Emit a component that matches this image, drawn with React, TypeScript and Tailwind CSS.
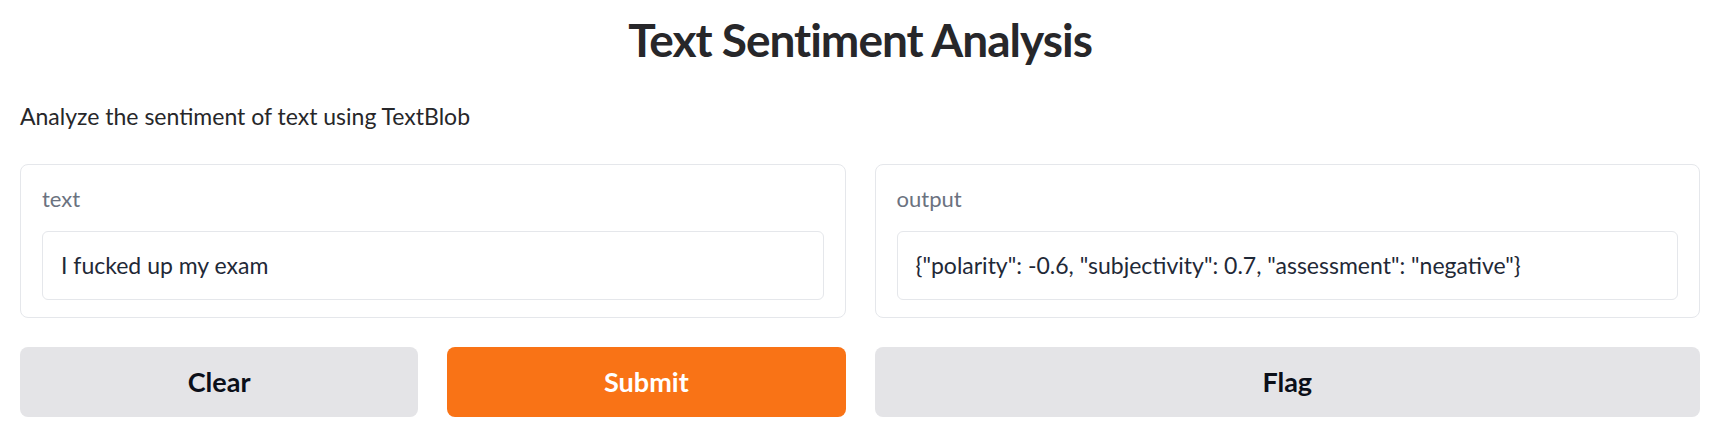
import React from "react";

const font = { fontFamily: '"Lato", "Liberation Sans", sans-serif' };

function Panel({ label, value }: { label: string; value: string }) {
  return (
    <div className="flex h-[154px] flex-col rounded-lg border border-[#e5e7eb] bg-white px-[21px] pt-[20px]">
      <span className="text-[22px] leading-[28px] text-[#6b7280]">{label}</span>
      <div className="mt-[18px] flex h-[69px] items-center rounded-md border border-[#e5e7eb] px-[18px] text-[23px] text-[#1f2937]">
        {value}
      </div>
    </div>
  );
}

export default function App() {
  return (
    <div className="min-h-[442px] bg-white pl-[20px] pr-[23px]" style={font}>
      <h1 className="pt-[12px] text-center text-[46px] font-bold leading-[56px] tracking-[-1px] text-[#27272a]">
        Text Sentiment Analysis
      </h1>
      <p className="mt-[33px] text-[23px] leading-[30px] text-[#27272a]">
        Analyze the sentiment of text using TextBlob
      </p>

      <div className="mt-[33px] grid grid-cols-2 gap-[29px]">
        <div className="flex flex-col gap-[29px]">
          <Panel label="text" value="I fucked up my exam" />
          <div className="grid grid-cols-2 gap-[29px]">
            <button className="h-[70px] rounded-lg bg-[#e4e4e7] text-[27px] font-bold text-[#0b0f19]">
              Clear
            </button>
            <button className="h-[70px] rounded-lg bg-[#f97316] text-[27px] font-bold text-white">
              Submit
            </button>
          </div>
        </div>
        <div className="flex flex-col gap-[29px]">
          <Panel
            label="output"
            value={'{"polarity": -0.6, "subjectivity": 0.7, "assessment": "negative"}'}
          />
          <button className="h-[70px] rounded-lg bg-[#e4e4e7] text-[27px] font-bold text-[#0b0f19]">
            Flag
          </button>
        </div>
      </div>
    </div>
  );
}
